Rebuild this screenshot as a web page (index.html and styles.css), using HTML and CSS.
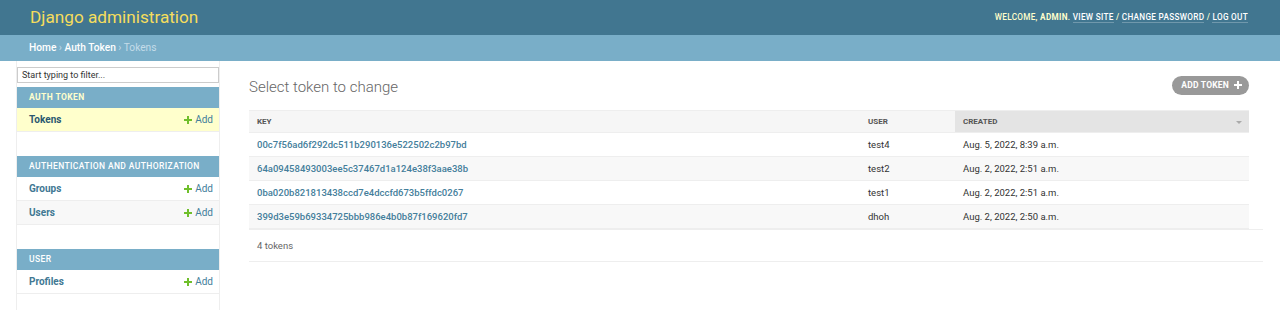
FILE: index.html
```html
<!DOCTYPE html>
<html lang="en">
<head>
<meta charset="UTF-8" />
<title>Select token to change | Django site admin</title>
<link rel="stylesheet" href="styles.css">
</head>
<body>

<!-- Header -->
<div id="header">
  <div id="branding">Django administration</div>
  <div id="user-tools">
    Welcome, <strong>admin</strong>.
    <a href="#">View site</a> /
    <a href="#">Change password</a> /
    <a href="#">Log out</a>
  </div>
</div>

<div class="breadcrumbs">
  <a href="#">Home</a> &rsaquo; <a href="#">Auth Token</a> &rsaquo; Tokens
</div>

<div id="main">
  <div class="toggle-nav"></div>

  <!-- Sidebar -->
  <div id="nav-sidebar">
    <input type="search" id="nav-filter" placeholder="Start typing to filter..." />

    <div class="module current-app">
      <div class="caption">Auth Token</div>
      <div class="model-row current-model">
        <a class="model-link" href="#">Tokens</a>
        <a class="addlink" href="#"><svg class="plus" viewBox="0 0 8 8"><path d="M3 0h2v3h3v2H5v3H3V5H0V3h3z" fill="#70bf2b"/></svg>Add</a>
      </div>
    </div>

    <div class="module">
      <div class="caption">Authentication and Authorization</div>
      <div class="model-row">
        <a class="model-link" href="#">Groups</a>
        <a class="addlink" href="#"><svg class="plus" viewBox="0 0 8 8"><path d="M3 0h2v3h3v2H5v3H3V5H0V3h3z" fill="#70bf2b"/></svg>Add</a>
      </div>
      <div class="model-row alt">
        <a class="model-link" href="#">Users</a>
        <a class="addlink" href="#"><svg class="plus" viewBox="0 0 8 8"><path d="M3 0h2v3h3v2H5v3H3V5H0V3h3z" fill="#70bf2b"/></svg>Add</a>
      </div>
    </div>

    <div class="module">
      <div class="caption">User</div>
      <div class="model-row">
        <a class="model-link" href="#">Profiles</a>
        <a class="addlink" href="#"><svg class="plus" viewBox="0 0 8 8"><path d="M3 0h2v3h3v2H5v3H3V5H0V3h3z" fill="#70bf2b"/></svg>Add</a>
      </div>
    </div>
  </div>

  <!-- Content -->
  <div id="content">
    <div class="title-row">
      <h1>Select token to change</h1>
      <a class="object-tool" href="#">Add token <svg class="tool-plus" viewBox="0 0 8 8"><path d="M3 0h2v3h3v2H5v3H3V5H0V3h3z" fill="#fff"/></svg></a>
    </div>

    <table id="result_list">
      <thead>
        <tr>
          <th class="col-key">Key</th>
          <th class="col-user">User</th>
          <th class="col-created sorted">Created <span class="sort-arrow"></span></th>
        </tr>
      </thead>
      <tbody>
        <tr>
          <td><a href="#">00c7f56ad6f292dc511b290136e522502c2b97bd</a></td>
          <td>test4</td>
          <td>Aug. 5, 2022, 8:39 a.m.</td>
        </tr>
        <tr class="alt">
          <td><a href="#">64a09458493003ee5c37467d1a124e38f3aae38b</a></td>
          <td>test2</td>
          <td>Aug. 2, 2022, 2:51 a.m.</td>
        </tr>
        <tr>
          <td><a href="#">0ba020b821813438ccd7e4dccfd673b5ffdc0267</a></td>
          <td>test1</td>
          <td>Aug. 2, 2022, 2:51 a.m.</td>
        </tr>
        <tr class="alt">
          <td><a href="#">399d3e59b69334725bbb986e4b0b87f169620fd7</a></td>
          <td>dhoh</td>
          <td>Aug. 2, 2022, 2:50 a.m.</td>
        </tr>
      </tbody>
    </table>

    <p class="paginator">4 tokens</p>
  </div>
</div>

</body>
</html>
```

FILE: styles.css
```css
/* Base */
body {
  margin: 0;
  padding: 0;
  background: #fff;
  color: #333;
  font-family: Roboto, "Liberation Sans", sans-serif;
  font-size: 10px;
}
a {
  color: #447e9b;
  text-decoration: none;
}

/* Header */
#header {
  height: 35px;
  background: #417690;
  display: flex;
  justify-content: space-between;
  align-items: center;
  padding: 0 32px 0 30px;
}
#branding {
  color: #f5dd5d;
  font-size: 17.2px;
  font-weight: 400;
  margin-top: -1px;
}
#user-tools {
  color: #ffc;
  font-size: 8.2px;
  font-weight: 500;
  text-transform: uppercase;
  letter-spacing: 0.3px;
  margin-top: -2px;
}
#user-tools strong {
  font-weight: 700;
}
#user-tools a {
  color: #fff;
  border-bottom: 1px solid rgba(255, 255, 255, 0.25);
}

/* Breadcrumbs */
.breadcrumbs {
  height: 26px;
  line-height: 26px;
  background: #79aec8;
  color: #c4dce8;
  padding-left: 29px;
  font-size: 10.2px;
}
.breadcrumbs a {
  color: #fff;
  font-weight: 500;
}

/* Layout */
#main {
  display: flex;
  min-height: 249px;
}
.toggle-nav {
  width: 16px;
  border-right: 1px solid #eee;
}

/* Sidebar */
#nav-sidebar {
  width: 202px;
  border-right: 1px solid #eee;
  padding-top: 6px;
}
#nav-filter {
  display: block;
  box-sizing: border-box;
  width: 100%;
  height: 16px;
  margin: 0 0 4px 0;
  padding: 0 4px;
  border: 1px solid #ccc;
  background: #fff;
  font-family: Roboto, "Liberation Sans", sans-serif;
  font-size: 9px;
  color: #333;
  outline: none;
}
#nav-filter::placeholder {
  color: #333;
}
.module {
  margin-bottom: 24px;
}
.caption {
  height: 21px;
  line-height: 21px;
  background: #79aec8;
  color: #fff;
  padding-left: 12px;
  font-size: 8.5px;
  font-weight: 500;
  text-transform: uppercase;
  letter-spacing: 0.4px;
}
.current-app .caption {
  color: #ffc;
  font-weight: 700;
}
.model-row {
  height: 23px;
  border-bottom: 1px solid #eee;
  display: flex;
  justify-content: space-between;
  align-items: center;
  padding: 0 6px 0 12px;
}
.model-row.alt {
  background: #f8f8f8;
}
.current-model {
  background: #ffc;
}
.model-link {
  font-weight: 700;
  color: #417893;
}
.current-model .model-link {
  color: #2b5870;
}
.addlink {
  color: #447e9b;
  display: flex;
  align-items: center;
}
.plus {
  width: 8px;
  height: 8px;
  margin-right: 3px;
}

/* Content */
#content {
  flex: 1;
  padding: 14px 17px 0 29px;
}
.title-row {
  display: flex;
  justify-content: space-between;
  align-items: center;
  height: 20px;
  margin-right: 14px;
}
h1 {
  margin: 0;
  font-size: 15px;
  font-weight: 300;
  color: #666;
  margin-top: 3px;
}
.object-tool {
  background: #999;
  color: #fff;
  border-radius: 10px;
  height: 19px;
  display: flex;
  align-items: center;
  padding: 0 7px 0 9px;
  font-size: 8.5px;
  font-weight: 700;
  text-transform: uppercase;
  letter-spacing: 0.2px;
}
.tool-plus {
  width: 8px;
  height: 8px;
  margin-left: 5px;
}

/* Table */
#result_list {
  margin-top: 15px;
  width: calc(100% - 14px);
  border-collapse: collapse;
}
#result_list th {
  height: 21px;
  background: #f6f6f6;
  border-top: 1px solid #eee;
  border-bottom: 1px solid #eee;
  text-align: left;
  padding: 0 8px;
  font-size: 8px;
  font-weight: 700;
  color: #555;
  text-transform: uppercase;
}
#result_list th.sorted {
  background: #e4e4e4;
  position: relative;
}
.col-user {
  width: 79px;
}
.col-created {
  width: 278px;
}
.sort-arrow {
  position: absolute;
  right: 7px;
  top: 10px;
  border-left: 3px solid transparent;
  border-right: 3px solid transparent;
  border-top: 3px solid #aaa;
}
#result_list td {
  height: 23px;
  border-bottom: 1px solid #eee;
  padding: 0 8px;
  font-size: 9.5px;
}
#result_list td a {
  font-weight: 500;
}
#result_list tr.alt td {
  background: #f8f8f8;
}

/* Paginator */
.paginator {
  margin: 0;
  height: 31px;
  line-height: 31px;
  border-top: 1px solid #eee;
  border-bottom: 1px solid #eee;
  padding-left: 8px;
  color: #666;
  font-size: 9.5px;
}
```
